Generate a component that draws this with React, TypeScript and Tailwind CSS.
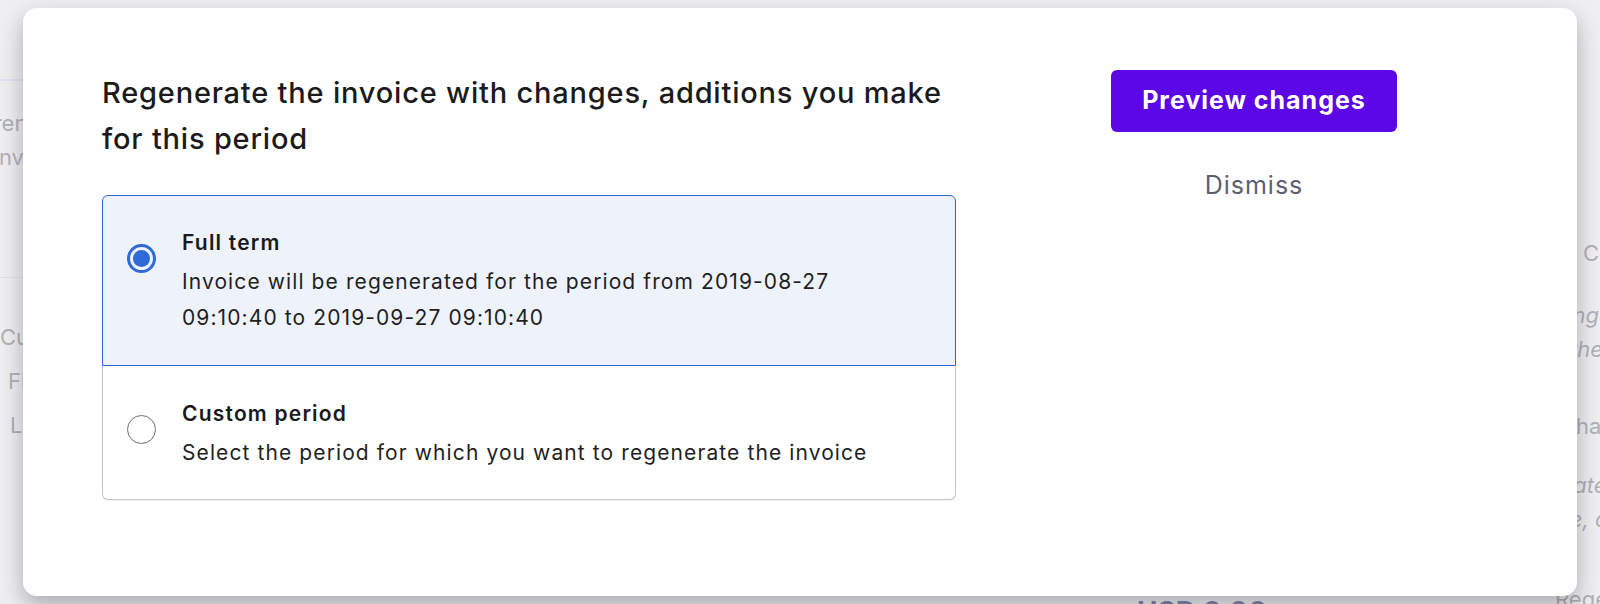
const options = [
  {
    title: 'Full term',
    text: 'Invoice will be regenerated for the period from 2019-08-27 09:10:40 to 2019-09-27 09:10:40',
    selected: true,
  },
  {
    title: 'Custom period',
    text: 'Select the period for which you want to regenerate the invoice',
    selected: false,
  },
];

const Radio = ({ on }: { on: boolean }) =>
  on ? (
    <span className="mt-[19px] flex h-[29px] w-[29px] shrink-0 items-center justify-center rounded-full border-[3px] border-[#2f6ad8]">
      <span className="h-[17px] w-[17px] rounded-full bg-[#2f6ad8]" />
    </span>
  ) : (
    <span className="mt-[19px] h-[29px] w-[29px] shrink-0 rounded-full border-[1.5px] border-[#6e6e74] bg-white" />
  );

// faint page that sits behind the modal
const Backdrop = () => (
  <div className="flex h-full w-full text-[22px] text-[#b0b1b7]">
    <div className="flex w-[60px] flex-col overflow-hidden">
      <div className="h-[79px]" />
      <div className="h-[2px] bg-[#dfe3f2]" />
      <p className="-ml-[44px] mt-[25px] whitespace-nowrap leading-[34px]">Current</p>
      <p className="-ml-[7px] whitespace-nowrap leading-[34px]">Invoice</p>
      <div className="mt-[103px] h-px bg-[#e2e2e6]" />
      <p className="mt-[37px] whitespace-nowrap leading-[44px]">Customer</p>
      <p className="ml-[8px] whitespace-nowrap leading-[44px]">First</p>
      <p className="ml-[10px] whitespace-nowrap leading-[44px]">Last</p>
    </div>
    <div className="flex flex-1 flex-col">
      <div className="mt-[598px] ml-[1077px] whitespace-nowrap text-[28px] font-bold leading-none text-[#7d84a6]">
        USD 0.00
      </div>
    </div>
    <div className="flex w-[60px] flex-col overflow-hidden">
      <div className="mt-[14px] h-px bg-[#e2e2e6]" />
      <div className="mt-[208px] h-px bg-[#e2e2e6]" />
      <p className="ml-[43px] mt-[14px] whitespace-nowrap leading-[34px]">Cost</p>
      <div className="mt-[11px] h-px bg-[#e2e2e6]" />
      <p className="-ml-[10px] mt-[17px] whitespace-nowrap italic leading-[34px]">Change</p>
      <p className="ml-[30px] whitespace-nowrap italic leading-[34px]">the</p>
      <div className="mt-[26px] h-px bg-[#e2e2e6]" />
      <p className="ml-[20px] mt-[17px] whitespace-nowrap leading-[34px]">Charge</p>
      <div className="mt-[8px] h-px bg-[#e2e2e6]" />
      <p className="-ml-[10px] mt-[17px] whitespace-nowrap italic leading-[34px]">Update</p>
      <p className="-ml-[9px] whitespace-nowrap italic leading-[34px]">Time, cost</p>
      <div className="mt-[26px] h-px bg-[#e2e2e6]" />
      <p className="ml-[15px] mt-[20px] whitespace-nowrap leading-[34px]">Regenerate</p>
    </div>
  </div>
);

const App = () => {
  return (
    <div className="relative h-[604px] w-[1600px] overflow-hidden bg-[#efeff1] font-['Inter','Noto_Sans',sans-serif]">
      <Backdrop />

      <div className="absolute left-[23px] top-[8px] flex h-[588px] w-[1554px] rounded-[14px] bg-white shadow-[0_10px_22px_rgba(30,30,50,0.32)]">
        <div className="w-[933px] pl-[79px] pt-[62px]">
          <h2 className="w-[854px] text-[29px] font-medium leading-[46px] tracking-[0.8px] text-[#1b1b1d]">
            Regenerate the invoice with changes, additions you make for this period
          </h2>

          <div className="mt-[33px] w-[854px]">
            {options.map((o) =>
              <div
                key={o.title}
                className={
                  o.selected
                    ? 'flex gap-[26px] rounded-t-[6px] border border-[#2d66d6] bg-[#eef2fb] pl-[24px] pt-[29px] pb-[29px]'
                    : 'flex gap-[26px] rounded-b-[6px] border-x border-b border-[#c4c4ca] bg-white pl-[24px] pt-[30px] pb-[28px] shadow-[0_1px_1px_rgba(0,0,0,0.06)]'
                }>
                <Radio on={o.selected} />
                <div>
                  <div className="text-[21px] font-semibold leading-9 tracking-[1.2px] text-[#1a1a1c]">{o.title}</div>
                  <p className="mt-[3px] max-w-[720px] text-[21px] leading-9 tracking-[1.1px] text-[#1f1f22]">{o.text}</p>
                </div>
              </div>
            )}
          </div>
        </div>

        <div className="flex flex-1 flex-col items-center pr-[25px] pt-[62px]">
          <button className="h-[62px] w-[286px] rounded-[6px] bg-[#5c07e6] text-[25px] font-bold tracking-[1px] text-white">
            Preview changes
          </button>
          <button className="mt-[37px] text-[25px] leading-8 tracking-[1px] text-[#5d5f70]">Dismiss</button>
        </div>
      </div>
    </div>
  );
};

export default App;
